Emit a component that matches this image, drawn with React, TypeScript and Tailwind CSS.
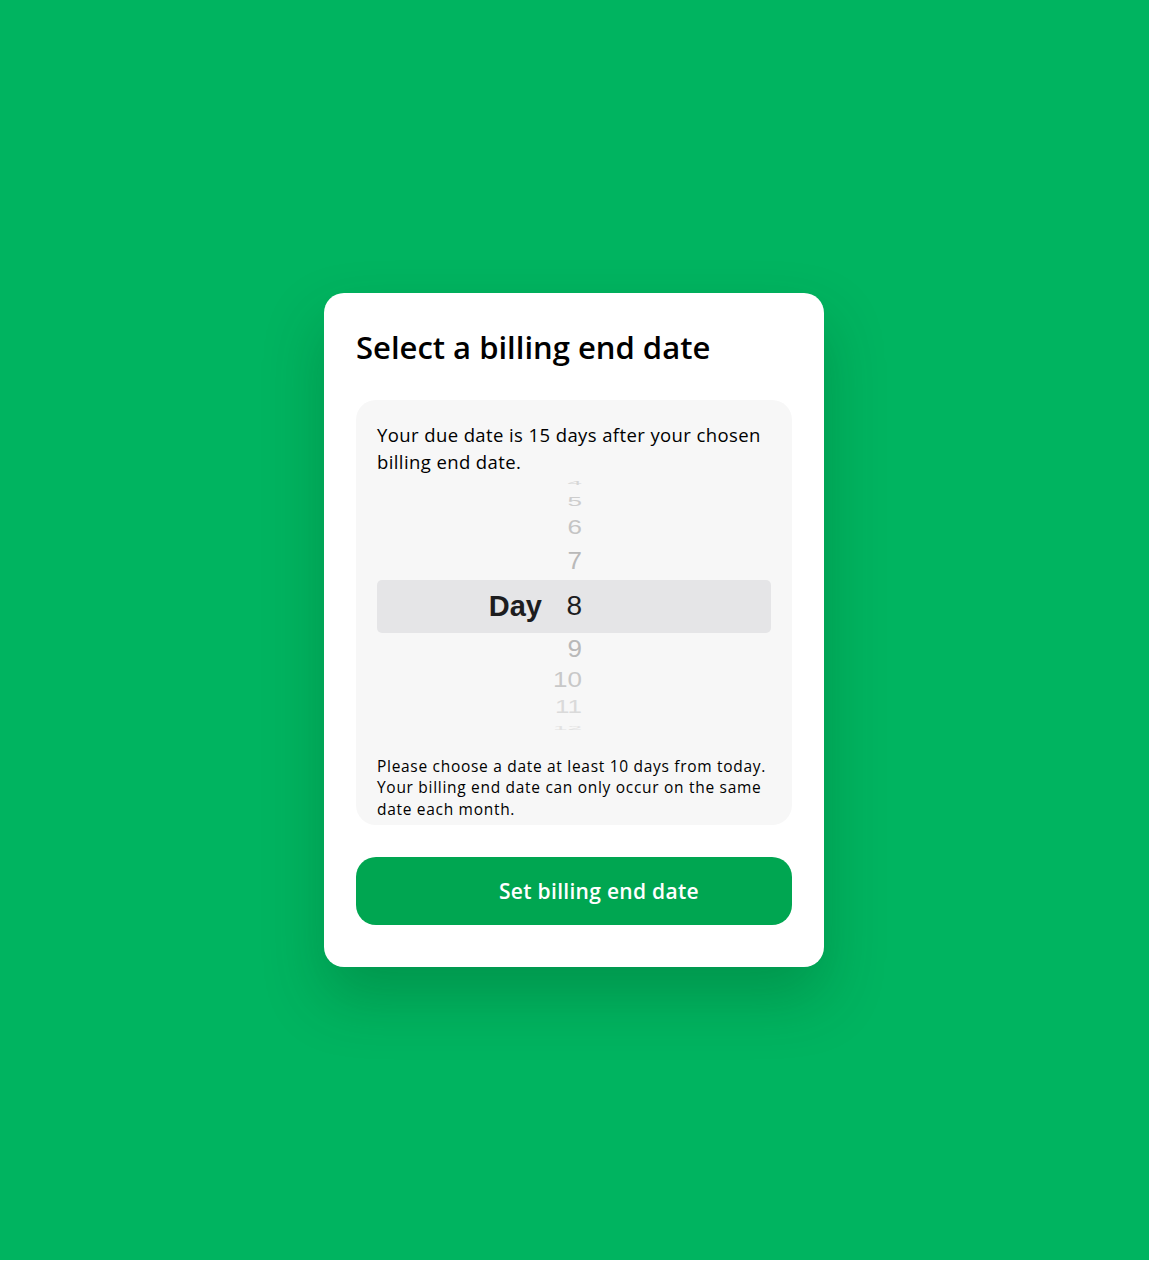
type WheelRow = {
  value: string;
  height: string;
  scale: string;
  color: string;
};

const ROWS_ABOVE: WheelRow[] = [
  { value: "4", height: "h-[16px]", scale: "scale-y-[0.2]", color: "text-[#d6d6d6]" },
  { value: "5", height: "h-[21px]", scale: "scale-y-[0.5]", color: "text-[#cdcdcd]" },
  { value: "6", height: "h-[30px]", scale: "scale-y-[0.75]", color: "text-[#c4c4c4]" },
  { value: "7", height: "h-[38px]", scale: "scale-y-[0.92]", color: "text-[#b9b9b9]" },
];

const ROWS_BELOW: WheelRow[] = [
  { value: "9", height: "h-[31px]", scale: "scale-y-[0.95]", color: "text-[#b9b9b9]" },
  { value: "10", height: "h-[31px]", scale: "scale-y-[0.88]", color: "text-[#c8c8c8]" },
  { value: "11", height: "h-[25px]", scale: "scale-y-[0.7]", color: "text-[#dadada]" },
  { value: "12", height: "h-[16px]", scale: "scale-y-[0.22]", color: "text-[#e2e2e2]" },
];

function Row({ row }: { row: WheelRow }) {
  return (
    <div className={`flex items-center ${row.height}`}>
      <div className="w-[165px]" />
      <div
        className={`w-[40px] text-right text-[26px] leading-none ${row.scale} ${row.color}`}
      >
        {row.value}
      </div>
    </div>
  );
}

export default function App() {
  return (
    <div className="flex h-[1260px] items-center justify-center bg-[#00b460] pr-[1px] font-['Open_Sans',sans-serif]">
      <div className="w-[500px] rounded-[20px] bg-white px-8 pt-8 pb-[42px] shadow-[0_30px_60px_rgba(0,60,20,0.25)]">
        <h1 className="text-[31px] font-semibold leading-[44px] text-black">
          Select a billing end date
        </h1>

        <div className="mt-[31px] rounded-[20px] bg-[#f7f7f7] px-[21px] pt-[21px] pb-[5px]">
          <p className="text-[18.5px] leading-[27px] tracking-[0.4px] text-black">
            Your due date is 15 days after your chosen billing end date.
          </p>

          <div className="flex flex-col font-['Liberation_Sans',Arial,sans-serif]">
            {ROWS_ABOVE.map((row) => (
              <Row key={row.value} row={row} />
            ))}
            <div className="flex h-[53px] items-center rounded-[5px] bg-[#e5e5e7]">
              <div className="w-[165px] text-right text-[29px] font-bold leading-none text-[#1d1d1f]">
                Day
              </div>
              <div className="w-[40px] text-right text-[28px] leading-none text-[#1d1d1f]">
                8
              </div>
            </div>
            {ROWS_BELOW.map((row) => (
              <Row key={row.value} row={row} />
            ))}
          </div>

          <p className="mt-[20px] text-[15.5px] leading-[21.5px] tracking-[0.7px] text-black">
            Please choose a date at least 10 days from today. Your billing end
            date can only occur on the same date each month.
          </p>
        </div>

        <button className="mt-8 flex h-[68px] w-full items-center justify-center rounded-[20px] bg-[#00a651] pl-[50px] text-[21px] font-semibold tracking-[0.3px] text-white">
          Set billing end date
        </button>
      </div>
    </div>
  );
}
